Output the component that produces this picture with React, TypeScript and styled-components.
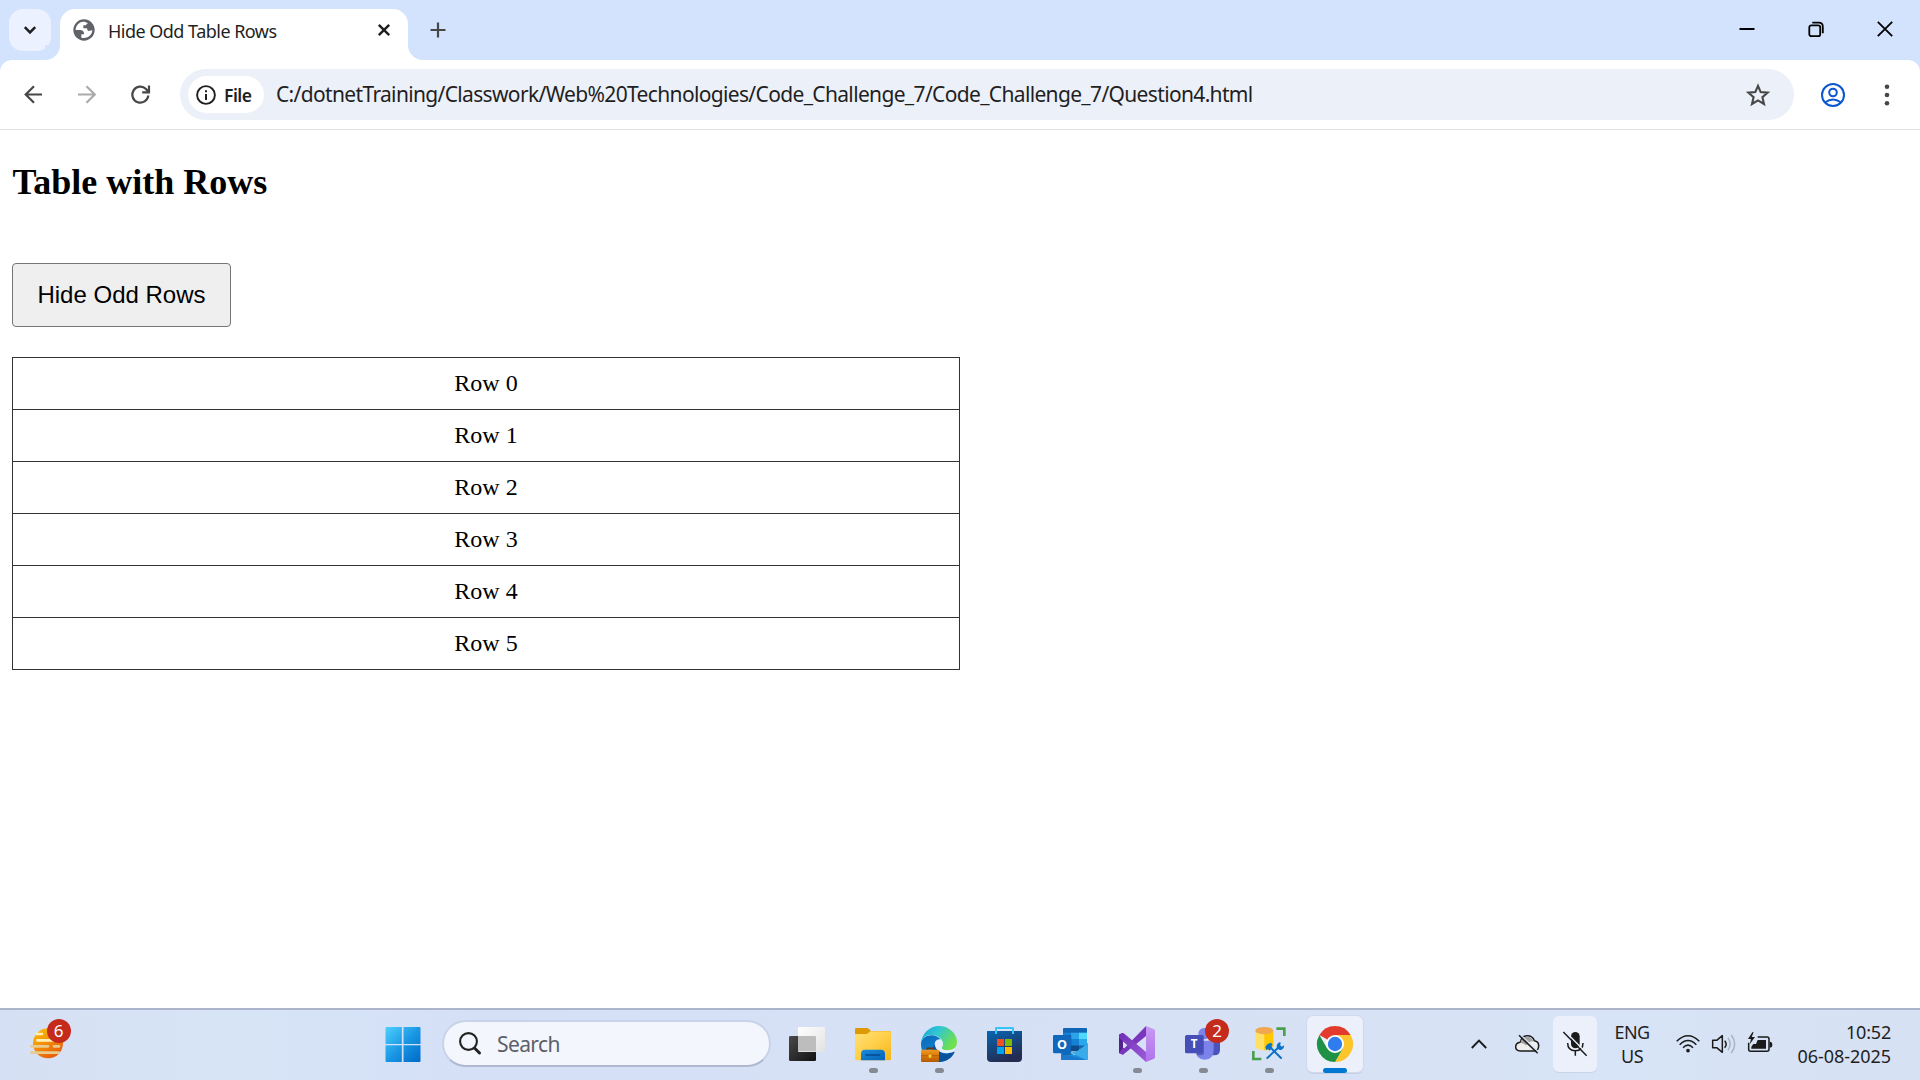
import React from 'react';
import styled, { createGlobalStyle } from 'styled-components';

const UI = '"Noto Sans", "Open Sans", sans-serif';

const GlobalStyle = createGlobalStyle`
  * { box-sizing: border-box; }
  body { margin: 0; background: #fff; overflow: hidden; }
  svg { display: block; flex: none; overflow: visible; }
`;

const Screen = styled.div`
  width: 1920px;
  height: 1080px;
  display: flex;
  flex-direction: column;
  background: #fff;
  overflow: hidden;
`;

/* Browser chrome */
const TabStrip = styled.div`
  height: 60px;
  flex: none;
  display: flex;
  align-items: flex-start;
  padding: 9px 0 0 9px;
  background: #d3e3fd;
`;
const TabSearch = styled.div`
  width: 42px;
  height: 42px;
  border-radius: 14px;
  background: #ebf1fe;
  display: flex;
  align-items: center;
  justify-content: center;
`;
const Tab = styled.div`
  position: relative;
  width: 348px;
  height: 51px;
  margin-left: 9px;
  padding: 0 17px 9px 13px;
  border-radius: 15px 15px 0 0;
  background: #fff;
  display: flex;
  align-items: center;
`;
const Flare = styled.span<{ $side: 'left' | 'right' }>`
  position: absolute;
  bottom: 0;
  ${p => p.$side}: -15px;
  width: 15px;
  height: 15px;
  background: radial-gradient(circle at ${p => (p.$side === 'left' ? '0 0' : '100% 0')}, #d3e3fd 14.5px, #fff 15.5px);
`;
const Text = styled.span<{ $size: number; $track?: number; $color?: string; $weight?: number }>`
  font-family: ${UI};
  font-size: ${p => p.$size}px;
  font-weight: ${p => p.$weight ?? 400};
  letter-spacing: ${p => p.$track ?? 0}px;
  color: ${p => p.$color ?? '#1f1f1f'};
  white-space: nowrap;
  line-height: 24px;
`;
const TabTitle = styled(Text)`
  margin-left: 13px;
  padding-top: 2px;
  flex: 1;
`;
const NewTab = styled.div`
  margin: 13px 0 0 22px;
`;
const WindowControls = styled.div`
  margin-left: auto;
  display: flex;
  gap: 53px;
  padding: 12px 27px 0 0;
`;
const ToolbarBack = styled.div`
  background: #d3e3fd;
  flex: none;
`;
const Toolbar = styled.div`
  height: 70px;
  border-bottom: 1px solid #dfe1e5;
  border-radius: 12px 12px 0 0;
  background: #fff;
  display: flex;
  align-items: center;
  padding: 0 22px 0 24px;
`;
const NavButtons = styled.div`
  width: 156px;
  display: flex;
  gap: 34.5px;
`;
const Omnibox = styled.div`
  width: 1614px;
  height: 51px;
  border-radius: 26px;
  background: #ecf0f9;
  display: flex;
  align-items: center;
  padding: 0 24px 0 8px;
`;
const SchemeChip = styled.div`
  width: 76px;
  height: 37px;
  border-radius: 19px;
  background: #fff;
  display: flex;
  align-items: center;
  padding-left: 8px;
  gap: 8px;
`;
const Url = styled(Text)`
  margin-left: 12px;
  padding-bottom: 1px;
  flex: 1;
`;
const ToolbarEnd = styled.div`
  flex: 1;
  display: flex;
  align-items: center;
  justify-content: space-between;
  padding: 0 8px 0 27px;
`;

/* Web page */
const Page = styled.main`
  flex: 1;
  padding: 32px 12px 0;
  font-family: "Liberation Serif", serif;
  color: #000;
`;
const Heading = styled.h2`
  margin: 0 0 60px;
  padding-left: 0.5px;
  font-size: 36px;
  line-height: 41px;
  font-weight: 700;
`;
const HideButton = styled.button`
  display: block;
  width: 219px;
  height: 64px;
  padding: 0 0 1px;
  border: 1px solid #767676;
  border-radius: 4px;
  background: #efefef;
  color: #000;
  font: 24px "Liberation Sans", sans-serif;
`;
const Table = styled.table`
  width: 948px;
  margin-top: 30px;
  border-collapse: collapse;
  font-size: 24px;
`;
const Cell = styled.td`
  height: 52px;
  padding: 0;
  border: 1px solid #333;
  text-align: center;
`;

/* Taskbar */
const Taskbar = styled.footer`
  height: 72px;
  flex: none;
  display: flex;
  border-top: 2px solid #abb4ca;
  background: linear-gradient(90deg, #d6e0f4, #d7e4f6 12%, #d5e0f7 25%, #d7e1f5 60%, #d7e3f6 85%, #d7e1f4);
`;
const Widgets = styled.div`
  position: relative;
  width: 370px;
  padding: 18px 0 0 30px;
`;
const Badge = styled.span<{ $left: number; $top: number }>`
  position: absolute;
  left: ${p => p.$left}px;
  top: ${p => p.$top}px;
  width: 24px;
  height: 24px;
  border-radius: 50%;
  background: #c42b1c;
  color: #fff;
  font: 17px/24px ${UI};
  text-align: center;
`;
const Tile = styled.div<{ $active?: boolean }>`
  position: relative;
  width: 56px;
  height: 56px;
  margin: 6px 5px 0;
  padding-top: 10px;
  border-radius: 6px;
  background: ${p => (p.$active ? '#ebf0fb' : 'transparent')};
  box-shadow: ${p => (p.$active ? '0 0 0 1px #d0daee, 0 2px 0 #c5cfe2' : 'none')};
  display: flex;
  flex-direction: column;
  align-items: center;
  gap: 6px;
`;
const Indicator = styled.span<{ $active?: boolean }>`
  width: ${p => (p.$active ? 24 : 9)}px;
  height: 5px;
  flex: none;
  border-radius: 3px;
  background: ${p => (p.$active ? '#0078d4' : '#858a93')};
`;
const SearchBox = styled.div`
  width: 329px;
  height: 47px;
  margin: 10px 3px 0 6px;
  border: 2px solid #c8d3e9;
  border-bottom-color: #aeb9d0;
  border-radius: 24px;
  background: #f3f6fd;
  display: flex;
  align-items: center;
  padding-left: 15px;
  gap: 16px;
`;
const Tray = styled.div`
  margin-left: auto;
  display: flex;
  align-items: center;
  padding-right: 29px;
`;
const TraySlot = styled.div<{ $width: number; $lit?: boolean }>`
  width: ${p => p.$width}px;
  height: 56px;
  border-radius: 6px;
  background: ${p => (p.$lit ? '#ebf0fb' : 'transparent')};
  box-shadow: ${p => (p.$lit ? '0 1px 0 #c9d3e7' : 'none')};
  margin-bottom: 2px;
  display: flex;
  align-items: center;
  justify-content: center;
`;
const Lines = styled.div<{ $width: number; $align: string }>`
  width: ${p => p.$width}px;
  padding-bottom: 3px;
  display: flex;
  flex-direction: column;
  align-items: ${p => p.$align};
`;

const AppIcon = ({ x, children }: { x: number; children: React.ReactNode }) => (
  <svg width="36" height="36" viewBox={`${x} 78 108 108`}>{children}</svg>
);

const StartIcon = () => (
  <AppIcon x={1156.5}>
    <defs>
      <linearGradient id="win" gradientUnits="userSpaceOnUse" x1="1158" y1="81" x2="1263" y2="186">
        <stop offset="0" stopColor="#4fd0ff" /><stop offset=".5" stopColor="#1a98e4" /><stop offset="1" stopColor="#0069c8" />
      </linearGradient>
    </defs>
    <path fill="url(#win)" d="M1161 81h46v51h-49V84a3 3 0 0 1 3-3zM1212 81h48a3 3 0 0 1 3 3v48h-51zM1158 136h49v50h-46a3 3 0 0 1-3-3zM1212 136h51v47a3 3 0 0 1-3 3h-48z" />
  </AppIcon>
);

const TaskViewIcon = () => (
  <AppIcon x={1077}>
    <defs>
      <linearGradient id="tvd" x2="1" y2="1"><stop stopColor="#4a4a4a" /><stop offset="1" stopColor="#111" /></linearGradient>
      <linearGradient id="tvl" x2="1" y2="1"><stop stopColor="#fff" /><stop offset="1" stopColor="#e2e2e2" /></linearGradient>
    </defs>
    <rect x="1077" y="108" width="81" height="75" rx="4" fill="url(#tvd)" />
    <rect x="1104" y="81" width="81" height="75" rx="3" fill="url(#tvl)" />
    <path d="M1104 108h51a3 3 0 0 1 3 3v43h-54z" fill="#bdbdbd" />
  </AppIcon>
);

const ExplorerIcon = () => (
  <AppIcon x={45}>
    <defs>
      <linearGradient id="fold" x2="1" y2="1"><stop stopColor="#ffe07a" /><stop offset=".5" stopColor="#ffcf48" /><stop offset="1" stopColor="#f5b41a" /></linearGradient>
      <linearGradient id="fblue" x2="1" y2="1"><stop stopColor="#1a8cdc" /><stop offset="1" stopColor="#0563b6" /></linearGradient>
    </defs>
    <path d="M49 84h31q4 0 7 3l6 6h56q4 0 4 4v12H45V88q0-4 4-4z" fill="#dd9a04" />
    <path d="M45 102h33q4 0 7-3l6-5h58q4 0 4 4v79q0 4-4 4H49q-4 0-4-4z" fill="url(#fold)" />
    <path d="M63 181v-20q0-12 12-12h48q12 0 12 12v20z" fill="url(#fblue)" />
    <path d="M78 165h41" stroke="#074a8e" strokeWidth="5" strokeLinecap="round" />
  </AppIcon>
);

const EdgeIcon = () => (
  <AppIcon x={243}>
    <defs>
      <linearGradient id="eg1" x2="1" y2=".5"><stop stopColor="#1aa0dd" /><stop offset=".45" stopColor="#30c6d2" /><stop offset="1" stopColor="#70e04c" /></linearGradient>
      <linearGradient id="eg2" x2=".7" y2="1"><stop stopColor="#0a68b8" /><stop offset="1" stopColor="#1391e0" /></linearGradient>
      <linearGradient id="eg3" x2="0" y2="1"><stop stopColor="#ef9a20" /><stop offset=".5" stopColor="#d9790a" /><stop offset="1" stopColor="#b45a05" /></linearGradient>
    </defs>
    <path d="M243 132c0-14 14-26 31-26 13 0 23 5 27 12-12-2-19 8-16 19 5 19 33 25 57 17-8 19-26 32-46 32-34 0-53-25-53-54z" fill="url(#eg2)" />
    <path d="M285 133c1 22 25 35 57 22l2 1c-8 19-26 30-46 30l-6-1c-15-9-21-36-7-52z" fill="#09529e" />
    <path d="M243 130c2-29 26-52 54-52 31 0 54 24 54 47 0 17-12 26-28 26-12 0-18-4-18-7s4-5 4-12c0-14-15-27-35-27-16 0-28 10-31 25z" fill="url(#eg1)" />
    <path d="M285 133c0-8 5-13 12-13 8 0 12 6 12 12 0 7-4 9-4 12 0 4 6 7 18 7 9 0 16-2 21-6-2 5-3 8-3 10-30 12-56-2-56-22z" fill="#e3edfb" />
    <path d="M262 150v-5h17v5" fill="none" stroke="#60390d" strokeWidth="5" />
    <rect x="243" y="149" width="54" height="37" rx="3" fill="url(#eg3)" />
    <path d="M243 167h54" stroke="#a75306" strokeWidth="2" />
    <rect x="266" y="164" width="8" height="9" rx="2" fill="#ffd23b" />
  </AppIcon>
);

const StoreIcon = () => (
  <AppIcon x={441}>
    <defs>
      <linearGradient id="store" x2=".4" y2="1"><stop stopColor="#0766b3" /><stop offset="1" stopColor="#242c52" /></linearGradient>
    </defs>
    <path d="M441 93h105v81q0 12-12 12h-81q-12 0-12-12z" fill="url(#store)" />
    <path d="M468 102V85q0-1 1-1h49q1 0 1 1v17" fill="none" stroke="#35c4f3" strokeWidth="6" />
    <path d="M471 117h21v21h-21z" fill="#f25022" /><path d="M495 117h21v21h-21z" fill="#7fba00" />
    <path d="M471 141h21v21h-21z" fill="#00a4ef" /><path d="M495 141h21v21h-21z" fill="#ffb900" />
  </AppIcon>
);

const OutlookIcon = () => (
  <AppIcon x={639}>
    <path d="M669 87q0-3 3-3h66q3 0 3 3v60h-72z" fill="#1066b5" />
    <path d="M669 98h24v19h-24z" fill="#1481d2" /><path d="M693 98h24v19h-24z" fill="#2ba3e8" /><path d="M717 98h24v19h-24z" fill="#50d9ff" />
    <path d="M693 117h24v20h-24z" fill="#1481d2" /><path d="M717 117h24v20h-24z" fill="#28a8ea" /><path d="M693 137h24v17h-24z" fill="#0d4b8c" /><path d="M717 137h24v12h-24z" fill="#1365ad" />
    <path d="M663 144l41 22 40-37v47q0 4-4 4h-73q-4 0-4-4z" fill="#1b8bdc" />
    <path d="M744 130v46q0 4-4 4l-48-22 20-5z" fill="#39abe9" />
    <path d="M663 160l72 20h-68q-4 0-4-4z" fill="#1c78cb" />
    <path d="M669 105h25v60h-25z" fill="#0a4a84" opacity=".5" />
    <rect x="639" y="105" width="54" height="55" rx="4" fill="#1068bd" />
    <text x="666" y="145.500" textAnchor="middle" fontFamily="Noto Sans, sans-serif" fontWeight="700" fontSize="38" fill="#fff">O</text>
  </AppIcon>
);

const VisualStudioIcon = () => (
  <AppIcon x={57}>
    <defs>
      <linearGradient id="vsr" x2="0" y2="1"><stop stopColor="#c79af3" /><stop offset="1" stopColor="#ae72ec" /></linearGradient>
      <linearGradient id="vsb" x2="1" y2="1"><stop stopColor="#6f2fb4" /><stop offset="1" stopColor="#9d5cdb" /></linearGradient>
    </defs>
    <path d="M57 104l12-5v65l-12-5z" fill="#52218f" />
    <path d="M57 159l12 5 69-56V78L73 145l-4-2z" fill="#7a37bd" />
    <path d="M57 104l9-5q4-1 7 2l65 55v30L57 113z" fill="url(#vsb)" />
    <path d="M138 78l24 10q3 1 3 4v80q0 3-3 4l-24 10z" fill="url(#vsr)" />
  </AppIcon>
);

const TeamsIcon = () => (
  <AppIcon x={255}>
    <path d="M325 122h35v27q0 17-17 17h-18z" fill="#4b53bc" />
    <circle cx="312" cy="101" r="17" fill="#7b83eb" />
    <path d="M288 122h49q4 0 4 4v25q0 28-27 28t-26-28z" fill="#7b83eb" />
    <path d="M294 105h13q5 0 5 5v49q0 7-7 7h-15z" fill="#3c4499" opacity=".6" />
    <rect x="255" y="105" width="54" height="55" rx="5" fill="#464eb8" />
    <text x="282" y="145" textAnchor="middle" fontFamily="Noto Sans, sans-serif" fontWeight="700" fontSize="35" fill="#fff">T</text>
  </AppIcon>
);

const DatabaseToolsIcon = () => (
  <AppIcon x={453}>
    <path d="M466 92h54v50q-8 9-27 9t-27-9z" fill="#ffe066" />
    <path d="M493 92h27v50q-8 9-27 9z" fill="#ffc800" />
    <ellipse cx="493" cy="92" rx="27" ry="11" fill="#efa850" />
    <path d="M529 86h24v22M460 153v24h24" fill="none" stroke="#4ba04e" strokeWidth="8" />
    <path d="M502 174l34-32M512 143l31 31" fill="none" stroke="#d9e4f7" strokeWidth="11" />
    <path d="M502 174l34-32M512 143l31 31" fill="none" stroke="#0b72c8" strokeWidth="6" strokeLinecap="round" />
    <path d="M496 143q2-12 17-15l5 6-4 4 3 5-8 9-5-5-4 4zM531 144q-4-10 7-17l5 1-3 7 6 5 6-4q2 9-7 13-6 2-10-1z" fill="#0b72c8" />
  </AppIcon>
);

const ChromeIcon = () => (
  <AppIcon x={651}>
    <path d="M705 132L658.200 105A54 54 0 0 1 751.800 105z" fill="#e23b2e" />
    <path d="M751.800 105A54 54 0 0 1 705 186L728.400 145.500 705 105z" fill="#fdc52c" />
    <path d="M705 186A54 54 0 0 1 658.200 105L681.600 145.500 728.400 145.500z" fill="#1e9144" />
    <circle cx="705" cy="132" r="27" fill="#fff" />
    <circle cx="705" cy="132" r="21.500" fill="#2f7cee" />
  </AppIcon>
);

const apps: { icon: React.ReactNode; running?: boolean; active?: boolean; badge?: string }[] = [
  { icon: <TaskViewIcon /> },
  { icon: <ExplorerIcon />, running: true },
  { icon: <EdgeIcon />, running: true },
  { icon: <StoreIcon /> },
  { icon: <OutlookIcon /> },
  { icon: <VisualStudioIcon />, running: true },
  { icon: <TeamsIcon />, running: true, badge: '2' },
  { icon: <DatabaseToolsIcon />, running: true },
  { icon: <ChromeIcon />, running: true, active: true },
];

const rows = ['Row 0', 'Row 1', 'Row 2', 'Row 3', 'Row 4', 'Row 5'];

export default function App() {
  return (
    <Screen>
      <GlobalStyle />
      <TabStrip>
        <TabSearch>
          <svg width="14" height="10" viewBox="0 0 14 10"><path d="M1.800 2.200L7 7.400l5.200-5.200" fill="none" stroke="#1f1f1f" strokeWidth="2.500" /></svg>
        </TabSearch>
        <Tab>
          <Flare $side="left" />
          <Flare $side="right" />
          <svg width="22" height="22" viewBox="0 0 66 66">
            <circle cx="33" cy="33" r="32" fill="#5f6368" />
            <path d="M31 8C17 9 8 20 8 33l13 0c7 0 12 4 12 10l0 3-8 0 0 10c14 5 32-5 33-22l-12 2q-4-3-4-8H31v-9h8q1-5 6-6c-4-3-9-5-14-5z" fill="#fff" />
          </svg>
          <TabTitle $size={18} $track={-0.52}>Hide Odd Table Rows</TabTitle>
          <svg width="14" height="14" viewBox="0 0 14 14"><path d="M1.800 1.800l10.400 10.400M12.200 1.800L1.800 12.200" stroke="#1f1f1f" strokeWidth="2.400" /></svg>
        </Tab>
        <NewTab>
          <svg width="16" height="16" viewBox="0 0 16 16"><path d="M8 .5v15M.5 8h15" stroke="#474747" strokeWidth="2.200" /></svg>
        </NewTab>
        <WindowControls>
          <svg width="16" height="16" viewBox="0 0 16 16"><path d="M.5 8h15" stroke="#000" strokeWidth="2" /></svg>
          <svg width="16" height="16" viewBox="0 0 16 16" fill="none" stroke="#000" strokeWidth="1.800"><rect x="1.300" y="4.300" width="10.900" height="10.900" rx="2" /><path d="M4.300 1.700h6.500q4 0 4 4v6.500" /></svg>
          <svg width="16" height="16" viewBox="0 0 16 16"><path d="M.8.8l14.400 14.400M15.200.8L.8 15.200" stroke="#000" strokeWidth="1.800" /></svg>
        </WindowControls>
      </TabStrip>
      <ToolbarBack>
        <Toolbar>
          <NavButtons>
            <svg width="19" height="19" viewBox="0 0 19 19" fill="none" stroke="#474747" strokeWidth="2.200"><path d="M18 9.500H2M10 1.200L1.700 9.500l8.300 8.300" /></svg>
            <svg width="19" height="19" viewBox="0 0 19 19" fill="none" stroke="#ababab" strokeWidth="2.200"><path d="M0 9.500h16.500M8.500 1.200l8.300 8.300-8.300 8.300" /></svg>
            <svg width="19" height="19" viewBox="0 0 19 19" fill="none" stroke="#474747" strokeWidth="2.200"><path d="M17.300 10.500A8 8 0 1 1 15 4l2 2.300M18 .5v6.800h-6.800" /></svg>
          </NavButtons>
          <Omnibox>
            <SchemeChip>
              <svg width="20" height="20" viewBox="0 0 20 20"><circle cx="10" cy="10" r="8.900" fill="none" stroke="#1f1f1f" strokeWidth="1.900" /><path d="M10 9v6M10 5.200v2" stroke="#1f1f1f" strokeWidth="2" /></svg>
              <Text $size={17.5} $weight={600} $track={-0.5}>File</Text>
            </SchemeChip>
            <Url $size={21} $track={-0.655}>C:/dotnetTraining/Classwork/Web%20Technologies/Code_Challenge_7/Code_Challenge_7/Question4.html</Url>
            <svg width="24" height="24" viewBox="0 0 24 24"><path d="M12 2.800l2.700 6.300 6.900.6-5.200 4.500 1.600 6.800-6-3.600L6 21l1.600-6.800-5.200-4.500 6.900-.6z" fill="none" stroke="#474747" strokeWidth="2.100" /></svg>
          </Omnibox>
          <ToolbarEnd>
            <svg width="24" height="24" viewBox="0 0 24 24" fill="none" stroke="#0b57d0" strokeWidth="2"><circle cx="12" cy="12" r="11" /><circle cx="12" cy="9.500" r="3.800" /><path d="M4.300 19.300q7.700-5.400 15.400 0" /></svg>
            <svg width="6" height="22" viewBox="0 0 6 22" fill="#474747"><circle cx="3" cy="2.700" r="2.300" /><circle cx="3" cy="11" r="2.300" /><circle cx="3" cy="19.300" r="2.300" /></svg>
          </ToolbarEnd>
        </Toolbar>
      </ToolbarBack>

      <Page>
        <Heading>Table with Rows</Heading>
        <HideButton>Hide Odd Rows</HideButton>
        <Table>
          <tbody>
            {rows.map(row => <tr key={row}><Cell>{row}</Cell></tr>)}
          </tbody>
        </Table>
      </Page>

      <Taskbar>
        <Widgets>
          <svg width="33" height="31" viewBox="90 86 99 93">
            <defs><linearGradient id="sun" x2=".6" y2="1"><stop stopColor="#fdc50a" /><stop offset="1" stopColor="#e95e08" /></linearGradient></defs>
            <circle cx="144" cy="132" r="45" fill="url(#sun)" />
            <g stroke="#fff0b8" strokeWidth="8" strokeLinecap="round"><path d="M110 104h16M112 123h70" /></g>
            <g stroke="#e8cb8e" strokeWidth="8" strokeLinecap="round"><path d="M94 141h50M162 141h15M94 160h82" /></g>
          </svg>
          <Badge $left={46.5} $top={8.5}>6</Badge>
        </Widgets>
        <Tile><StartIcon /></Tile>
        <SearchBox>
          <svg width="22" height="23" viewBox="0 0 22 23" fill="none" stroke="#222"><circle cx="9.500" cy="9.500" r="8.400" strokeWidth="2.100" /><path d="M15.500 16l5 5" strokeWidth="3" strokeLinecap="round" /></svg>
          <Text $size={21} $track={-0.6} $color="#5c6066">Search</Text>
        </SearchBox>
        {apps.map((app, i) => (
          <Tile key={i} $active={app.active}>
            {app.icon}
            {app.running && <Indicator $active={app.active} />}
            {app.badge && <Badge $left={30} $top={3}>{app.badge}</Badge>}
          </Tile>
        ))}
        <Tray>
          <TraySlot $width={48}>
            <svg width="16" height="10" viewBox="0 0 16 10"><path d="M.8 9L8 1.500 15.200 9" fill="none" stroke="#1b1b1b" strokeWidth="1.900" /></svg>
          </TraySlot>
          <TraySlot $width={50}>
            <svg width="24" height="20" viewBox="198 104 72 60">
              <path d="M211 155q-14-1-14-12 0-12 14-14 4-20 21-20 16 0 21 15 13 2 13 15 0 16-15 16z" fill="#eee" stroke="#1b1b1b" strokeWidth="4.500" />
              <path d="M211 131q5-19 20-19 15 0 19 14-15 0-22 13-6-9-17-8z" fill="#a2a2a2" />
              <path d="M212 107l53 50" stroke="#d7e2f5" strokeWidth="4" /><path d="M207 108l56 54" stroke="#1b1b1b" strokeWidth="4.500" />
            </svg>
          </TraySlot>
          <TraySlot $width={44} $lit>
            <svg width="24" height="24" viewBox="339 96 72 72">
              <rect x="363" y="96" width="26" height="49" rx="13" fill="#1b1b1b" />
              <path d="M353 129q0 23 23 23t23-23M376 152v15" fill="none" stroke="#1b1b1b" strokeWidth="4.500" />
              <path d="M345 94l68 69" stroke="#ebf0fb" strokeWidth="4" /><path d="M340 96l70 71" stroke="#1b1b1b" strokeWidth="4.500" />
            </svg>
          </TraySlot>
          <Lines $width={70} $align="center">
            <Text $size={18} $track={-0.6}>ENG</Text>
            <Text $size={18} $track={-0.6}>US</Text>
          </Lines>
          <TraySlot $width={42}>
            <svg width="24" height="18" viewBox="681 104 72 54" fill="none" stroke="#1b1b1b" strokeWidth="4.500">
              <path d="M683 123q34-33 68 0M692 133q25-25 50 0M702 142q15-15 30 0" /><circle cx="717" cy="151" r="5.500" fill="#1b1b1b" stroke="none" />
            </svg>
          </TraySlot>
          <TraySlot $width={30}>
            <svg width="24" height="20" viewBox="789 102 72 60" fill="none" stroke="#1b1b1b" strokeWidth="4.500">
              <path d="M791 121h12l17-14v50l-17-14h-12zM827 122q9 10 0 21" strokeLinejoin="round" />
              <path d="M837 114q13 18 0 36M847 105q20 27 0 54" stroke="#a9b3c5" />
            </svg>
          </TraySlot>
          <TraySlot $width={42}>
            <svg width="24" height="20" viewBox="897 100 72 60">
              <path d="M926 109h28q6 0 6 6v31q0 6-6 6h-49q-6 0-6-6v-20" fill="none" stroke="#1b1b1b" strokeWidth="4.500" />
              <path d="M926 118h25v26h-44v-6l6-8h8zM962 123q8 0 8 9t-8 9zM910 95l-13 20h9l-4 16 16-22h-10l6-14z" fill="#1b1b1b" />
            </svg>
          </TraySlot>
          <Lines $width={110} $align="flex-end">
            <Text $size={18} $track={-0.2}>10:52</Text>
            <Text $size={18} $track={-0.05}>06-08-2025</Text>
          </Lines>
        </Tray>
      </Taskbar>
    </Screen>
  );
}
